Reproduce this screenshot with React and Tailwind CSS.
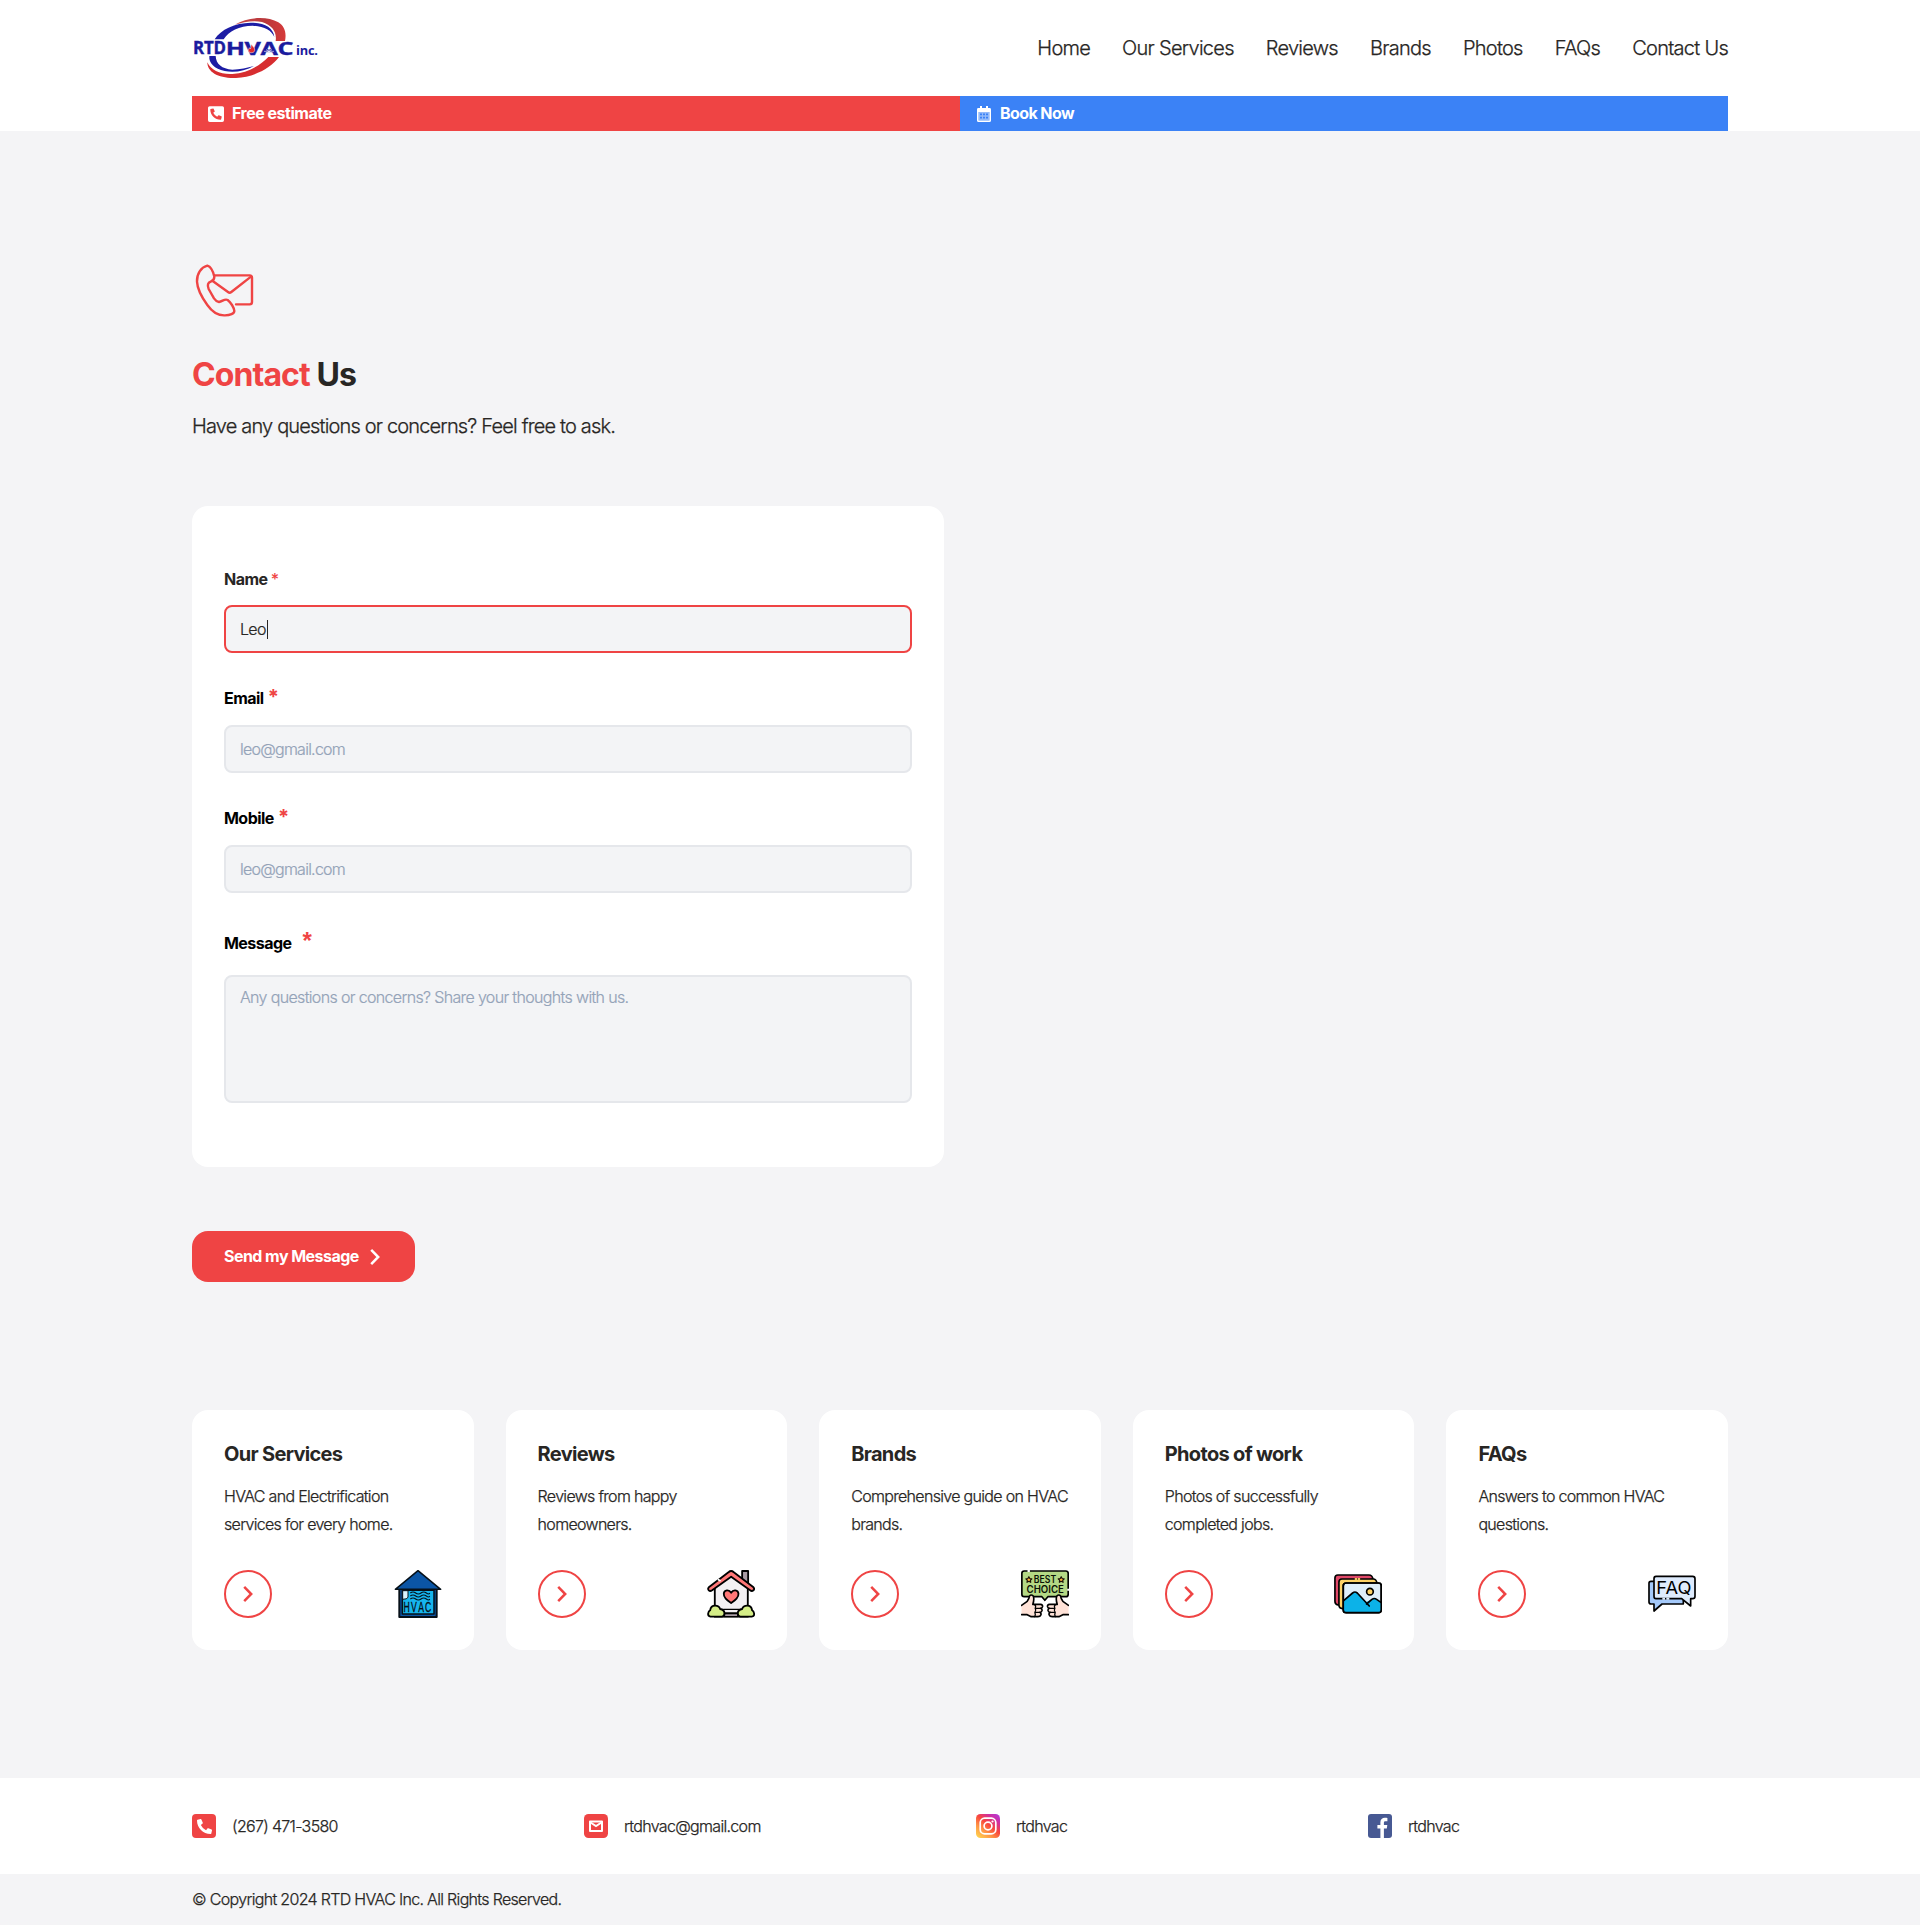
import React from "react";
import { FaPhoneAlt, FaPhoneSquareAlt } from "react-icons/fa";

function Logo() {
  return (
    <svg className="h-[72px] w-[128px]" viewBox="36 36 384 216" aria-label="RTD HVAC Inc.">
      <defs>
        <linearGradient id="arc" x1="0" x2="1">
          <stop offset="0" stopColor="#c8484a" />
          <stop offset="0.6" stopColor="#b9383b" />
          <stop offset="1" stopColor="#d63a3a" />
        </linearGradient>
      </defs>
      <path d="M164 74C205 50 262 48 295 67C314 79 320 98 315 123H287C291 96 277 76 246 66C220 60 190 66 164 74Z" fill="url(#arc)" />
      <path d="M104 118C122 88 165 69 212 68C252 68 280 82 283 111C275 91 252 79 218 77C178 77 146 93 131 118Z" fill="#1c1ca4" />
      <path d="M88 168H107C108 192 126 207 157 209C180 209 202 203 222 198C195 214 160 219 134 213C103 206 86 190 88 168Z" fill="#1c1ca4" />
      <path d="M82 187C93 211 122 224 157 222C203 219 240 197 265 171H297C272 205 222 231 168 234C116 236 82 217 82 187Z" fill="#d72d30" />
      <g fill="#1b1b9e" fontWeight="700">
        <text x="39" y="163" fontSize="52" fontFamily="'Open Sans'" textLength="98" lengthAdjust="spacingAndGlyphs" stroke="#1b1b9e" strokeWidth="1.2">RTD</text>
        <text x="137" y="165" fontSize="51" fontFamily="'Open Sans'" fontWeight="700" textLength="203" lengthAdjust="spacingAndGlyphs" stroke="#1b1b9e" strokeWidth="1">HVAC</text>
        <text x="348" y="165" fontSize="37" fontFamily="'Open Sans'" textLength="65" lengthAdjust="spacingAndGlyphs">inc.</text>
      </g>
      <path d="M214 133C218 140 226 144 224 152C222 160 207 160 205 152C204 147 207 147 208 143L211 147C214 143 212 138 214 133Z" fill="#e0282c" stroke="#fff" strokeWidth="1.5" />
      <path d="M267 144V164M258 149L276 160M276 149L258 160M252 154H282" stroke="#fff" strokeWidth="1.8" />
    </svg>
  );
}

function ContactIcon() {
  return (
    <svg className="-mt-px h-16 w-16" viewBox="36 24 192 192" fill="none" stroke="#ef4444" strokeWidth="7.2" strokeLinecap="round" strokeLinejoin="round">
      <path d="M82 47C63 52 50 71 51 95C52 118 69 147 82 165C98 188 115 197 135 196C150 196 163 191 163 183C162 172 152 157 143 150C134 145 127 155 117 156C110 155 106 151 102 145L86 117C81 105 84 98 92 95C99 92 103 87 103 80C100 67 92 50 82 47Z" />
      <path d="M104 76H209Q216 76 216 83V156Q216 163 209 163H168" />
      <path d="M97 92L144 126Q149 130 154 126L213 80" />
    </svg>
  );
}

function Calendar() {
  return (
    <svg className="h-4 w-[14px]" viewBox="0 0 14 16">
      <path fill="#fff" fillRule="evenodd" d="M3 0H5V2H9V0H11V2H12.4A1.5 1.5 0 0 1 14 3.5V14.4A1.6 1.6 0 0 1 12.4 16H1.6A1.6 1.6 0 0 1 0 14.4V3.5A1.5 1.5 0 0 1 1.6 2H3ZM1.5 6V14.4H12.5V6Z" />
      <path fill="#fff" fillOpacity=".45" d="M1.5 6H12.5V14.4H1.5Z" />
      <path fill="#3b82f6" d="M3 7.4H5V9.2H3ZM6 7.4H8V9.2H6ZM9 7.4H11V9.2H9ZM3 10.8H5V12.6H3ZM6 10.8H8V12.6H6ZM9 10.8H11V12.6H9Z" />
    </svg>
  );
}

function Chevron() {
  return (
    <svg className="h-4 w-4" viewBox="0 0 16 16" fill="none" stroke="currentColor" strokeWidth="2.5" strokeLinejoin="miter">
      <path d="M4.2 .9L11.2 8L4.2 15.1" />
    </svg>
  );
}

function HvacIcon() {
  return (
    <svg className="h-12 w-12" viewBox="41 60 144 144" strokeLinejoin="round">
      <path d="M57 112H169V201H57Z" fill="#0b55a5" stroke="#061018" strokeWidth="6" />
      <path d="M113 62L181 118H45Z" fill="#0b55a5" stroke="#061018" strokeWidth="4.5" />
      <path d="M66 121H161V192H66Z" fill="#16b5ee" stroke="#061018" strokeWidth="4.5" />
      <path d="M67 122H83V142Q80 148 67 148Z" fill="#d9f3ff" stroke="#061018" strokeWidth="3" />
      <path d="M90 129Q98 123 106 129T122 129T138 129T148 129M90 138Q98 132 106 138T122 138T138 138T148 138M90 147Q98 141 106 147T122 147T138 147T148 147" fill="none" stroke="#061018" strokeWidth="3.6" />
      <text transform="translate(0 187) scale(.62 1)" x="112 149 183 216" fontSize="42" fontFamily="'Liberation Sans'" fill="#061018" stroke="#061018" strokeWidth="1">HVAC</text>
    </svg>
  );
}

function HomeHeartIcon() {
  return (
    <svg className="h-12 w-12" viewBox="51.6 60 144 144" stroke="#000" strokeWidth="5.5" strokeLinejoin="round" strokeLinecap="round">
      <path d="M157 63H175V104L157 90Z" fill="#a89ba3" />
      <path d="M75 110L124 72L174 110V200H75Z" fill="#f3f0f3" />
      <path d="M124 63Q128 63 131 66L191 112Q195 117 191 121Q186 125 181 121L124 80L67 121Q61 125 57 121Q53 116 57 112L117 66Q120 63 124 63Z" fill="#ff7777" />
      <path d="M124 159C111 150 101 143 102 131C103 119 118 118 124 128C130 118 145 119 146 131C147 143 137 150 124 159Z" fill="#ff7777" />
      <path d="M101 178H147M101 189H147" strokeWidth="4" />
      <path d="M104 191H144V200H104Z" fill="#a89ba3" strokeWidth="4" />
      <path d="M62 200Q54 199 55 191Q56 184 61 181Q63 167 76 167Q88 167 91 177Q104 179 104 190Q104 200 96 200Z" fill="#d5ee87" />
      <path d="M186 200Q194 199 193 191Q192 184 187 181Q185 167 172 167Q160 167 157 177Q144 179 144 190Q144 200 152 200Z" fill="#d5ee87" />
      <path d="M86 89L91 92" stroke="#fff" strokeWidth="5" />
    </svg>
  );
}

function Thumb() {
  return (
    <g stroke="#000" strokeWidth="5" strokeLinejoin="round" strokeLinecap="round">
      <path d="M49 151L66 139Q72 131 73 123Q78 117 84 123Q88 131 83 148H106Q113 149 112 155Q111 160 106 160Q112 162 110 168Q108 172 104 172Q109 175 107 180Q105 185 98 185H78L66 179H49" fill="#ffe2d7" />
      <path d="M106 160H91M104 172H91M86 148Q94 151 90 160Q94 166 89 172Q92 180 88 185" fill="none" strokeWidth="4" />
    </g>
  );
}

function BestChoiceIcon() {
  const star = "M0-9L2.8-3.5L9-2.6L4.6 1.8L5.6 8L0 5L-5.6 8L-4.6 1.8L-9-2.6L-2.8-3.5Z";
  return (
    <svg className="h-12 w-12" viewBox="47.4 45 144 144">
      <path d="M57 48H182Q189 48 189 55V118Q189 125 182 125H128L119 136L110 125H57Q50 125 50 118V55Q50 48 57 48Z" fill="#b4d985" stroke="#000" strokeWidth="5" strokeLinejoin="round" />
      <path d="M67 48H74M189 101V107" stroke="#fff" strokeWidth="6" />
      <g fill="#ffb03a" stroke="#1b1309" strokeWidth="3.5" strokeLinejoin="round">
        <path d={star} transform="translate(71 74)" />
        <path d={star} transform="translate(168 74)" />
      </g>
      <g fontFamily="Inter" fontWeight="600" fontSize="30" fill="#0c1206" letterSpacing="0">
        <text x="86" y="85" textLength="67" lengthAdjust="spacingAndGlyphs">BEST</text>
        <text x="64" y="113" textLength="112" lengthAdjust="spacingAndGlyphs">CHOICE</text>
      </g>
      <Thumb />
      <g transform="translate(239 0) scale(-1 1)"><Thumb /></g>
    </svg>
  );
}

function PhotosIcon() {
  return (
    <svg className="h-12 w-12" viewBox="43.2 45 144 144" stroke="#000" strokeWidth="5" strokeLinejoin="round" strokeLinecap="round">
      <path d="M55 150Q46 148 46 139V69Q46 60 55 60H148Q158 60 160 72L70 90V150Z" fill="#e04868" />
      <path d="M69 161Q58 160 58 150V81Q58 72 67 72H161Q170 72 172 84L80 100V161Z" fill="#fdd267" />
      <path d="M80 84H177Q185 84 185 92V164Q185 173 177 173H80Q71 173 71 164V92Q71 84 80 84Z" fill="#e0effb" />
      <path d="M73 136L99 114Q106 108 113 114L140 141L157 133Q164 128 171 133L184 142V164Q184 172 177 172H80Q72 172 72 164Z" fill="#0cb2e8" stroke="none" />
      <path d="M73 136L99 114Q106 108 113 114L149 153M141 147L157 133Q164 128 171 133L184 142" fill="none" />
      <circle cx="151" cy="110" r="10" fill="#fdd267" />
      <path d="M80 84H177Q185 84 185 92V164Q185 173 177 173H80Q71 173 71 164V92Q71 84 80 84Z" fill="none" />
      <path d="M108 72H110M117 72H119" stroke="#fdd267" strokeWidth="6" />
    </svg>
  );
}

function FaqIcon() {
  return (
    <svg className="h-12 w-12" viewBox="54 45 144 144" strokeLinejoin="round">
      <path d="M63 79H160V147H96L72 168V147H63Q57 147 57 141V85Q57 79 63 79Z" fill="#a4c9fa" stroke="#000" strokeWidth="5" />
      <path d="M78 64H188Q195 64 195 71V124Q195 131 188 131H182V153L155 131H78Q72 131 72 124V71Q72 64 78 64Z" fill="#deebfd" stroke="#000" strokeWidth="5" />
      <path d="M97 131H105M109 131H118" stroke="#deebfd" strokeWidth="6" />
      <text x="79" y="116" fontSize="52" fontFamily="Inter" fontWeight="400" letterSpacing="0" textLength="105" lengthAdjust="spacingAndGlyphs" fill="#000">FAQ</text>
    </svg>
  );
}

function MailTile() {
  return (
    <svg className="h-6 w-6" viewBox="0 0 24 24">
      <rect width="24" height="24" rx="4.5" fill="#ef4444" />
      <path d="M6 7.5H18V17H6Z" fill="none" stroke="#fff" strokeWidth="2" strokeLinejoin="round" />
      <path d="M6.5 8.5L12 12L17.5 8.5" fill="none" stroke="#fff" strokeWidth="2" />
    </svg>
  );
}

function InstagramTile() {
  return (
    <svg className="h-6 w-6" viewBox="0 0 24 24">
      <defs>
        <linearGradient id="ig" x1="0.1" y1="1" x2="0.9" y2="0">
          <stop offset="0" stopColor="#ffd34f" />
          <stop offset="0.3" stopColor="#ff9445" />
          <stop offset="0.55" stopColor="#f8463c" />
          <stop offset="0.8" stopColor="#d02fa0" />
          <stop offset="1" stopColor="#b43ad6" />
        </linearGradient>
      </defs>
      <rect width="24" height="24" rx="4.5" fill="url(#ig)" />
      <rect x="4.2" y="4.2" width="15.6" height="15.6" rx="4.4" fill="none" stroke="#fff" strokeWidth="1.7" />
      <circle cx="12" cy="12" r="3.9" fill="none" stroke="#fff" strokeWidth="1.7" />
      <circle cx="16.5" cy="7.5" r="1.1" fill="#fff" />
    </svg>
  );
}

function FacebookTile() {
  return (
    <svg className="h-6 w-6" viewBox="0 0 24 24">
      <rect width="24" height="24" rx="3" fill="#475993" />
      <path d="M12.4 24V14.6H9.4V11H12.4V8.3C12.4 5.4 14.2 3.8 16.9 3.8C18.1 3.8 19.1 3.9 19.4 4V7.2H17.6C16.1 7.2 15.9 7.9 15.9 8.9V11H19.3L18.8 14.6H15.9V24Z" fill="#fff" />
    </svg>
  );
}

const nav = ["Home", "Our Services", "Reviews", "Brands", "Photos", "FAQs", "Contact Us"];

const cards = [
  ["Our Services", "HVAC and Electrification services for every home.", HvacIcon],
  ["Reviews", "Reviews from happy homeowners.", HomeHeartIcon],
  ["Brands", "Comprehensive guide on HVAC brands.", BestChoiceIcon],
  ["Photos of work", "Photos of successfully completed jobs.", PhotosIcon],
  ["FAQs", "Answers to common HVAC questions.", FaqIcon],
];

const body = "[-webkit-text-stroke:0.25px]";
const field = "flex h-12 items-center rounded-lg border-2 bg-[#f3f4f6] px-3.5 [-webkit-text-stroke:0.2px]";
const star = "ml-px text-xl leading-6 font-bold text-[#ef4444]";

export default function App() {
  return (
    <div className="min-h-[1925px] bg-[#f4f4f6] font-['Inter',sans-serif] text-base leading-[19px] font-light tracking-[-0.0425em] text-[#282624]">
      <header className="bg-white">
        <div className="mx-auto w-[1536px]">
          <div className="flex h-24 items-center justify-between">
            <Logo />
            <nav className={body + " flex gap-8 text-xl tracking-[-0.0363em]"}>
              {nav.map((n) => <a key={n}>{n}</a>)}
            </nav>
          </div>
          <div className="grid h-[35px] grid-cols-2 font-bold tracking-[-0.031em] text-white">
            <div className="flex items-center gap-2 bg-[#ef4444] px-4">
              <FaPhoneSquareAlt className="h-[18px] w-4" preserveAspectRatio="none" />
              Free estimate
            </div>
            <div className="flex items-center gap-2 bg-[#3b82f6] px-4 tracking-[-0.037em]">
              <span className="flex w-4 justify-center"><Calendar /></span>
              Book Now
            </div>
          </div>
        </div>
      </header>

      <main className="mx-auto w-[1536px] py-32">
        <ContactIcon />
        <h1 className="mt-[33px] text-[32px] leading-[39px] font-bold tracking-[-0.029em]"><span className="text-[#ef4444]">Contact</span> Us</h1>
        <p className={body + " mt-4 text-xl leading-8 tracking-[-0.0415em]"}>Have any questions or concerns? Feel free to ask.</p>

        <form className="mt-16 w-[752px] rounded-2xl bg-white px-8 py-16">
          <div className="font-bold tracking-[-0.034em]">Name <span className="font-medium text-[#ef4444]">*</span></div>
          <div className={field + " mt-4 border-[#ef4444]"}>
            Leo<span className="ml-px h-[19px] w-px bg-[#282624]" />
          </div>
          <div className="mt-8 h-6 font-bold tracking-[-0.034em] text-black">Email <span className={star}>*</span></div>
          <div className={field + " mt-4 border-[#e5e7eb] tracking-[-0.047em] text-[#94a3b8]"}>leo@gmail.com</div>
          <div className="mt-8 h-6 font-bold tracking-[-0.034em] text-black">Mobile <span className={star}>*</span></div>
          <div className={field + " mt-4 border-[#e5e7eb] tracking-[-0.047em] text-[#94a3b8]"}>leo@gmail.com</div>
          <div className="mt-8 flex h-[34px] items-start font-bold tracking-[-0.034em] text-black">
            <span className="pt-[9px]">Message</span>
            <span className="ml-[11px] pt-0.5 font-['Liberation_Sans'] text-2xl leading-7 tracking-normal text-[#ef4444]">*</span>
          </div>
          <div className="mt-4 h-32 rounded-lg border-2 border-[#e5e7eb] bg-[#f3f4f6] px-3.5 pt-[11px] tracking-[-0.041em] text-[#94a3b8] [-webkit-text-stroke:0.2px]">
            Any questions or concerns? Share your thoughts with us.
          </div>
        </form>

        <button className="mt-16 flex items-center gap-2 rounded-2xl bg-[#ef4444] px-8 py-4 font-bold tracking-[-0.034em] text-white">
          Send my Message <Chevron />
        </button>

        <section className="mt-32 grid grid-cols-5 gap-8">
          {cards.map(([title, text, Icon]) => (
            <article key={title} className="rounded-2xl bg-white p-8">
              <h2 className="text-xl leading-6 font-bold tracking-[-0.034em]">{title}</h2>
              <p className={body + " mt-4 h-14 leading-7"}>{text}</p>
              <div className="mt-8 flex items-center justify-between">
                <span className="flex h-12 w-12 items-center justify-center rounded-full border-2 border-[#ef4444] text-[#ef4444]">
                  <Chevron />
                </span>
                <Icon />
              </div>
            </article>
          ))}
        </section>
      </main>

      <footer className={body}>
        <div className="bg-white">
          <div className="mx-auto grid h-24 w-[1536px] grid-cols-4 items-center gap-8">
            <div className="flex items-center gap-4">
              <span className="flex h-6 w-6 items-center justify-center rounded bg-[#ef4444] text-white"><FaPhoneAlt size={15} /></span>
              (267) 471-3580
            </div>
            <div className="flex items-center gap-4"><MailTile />rtdhvac@gmail.com</div>
            <div className="flex items-center gap-4"><InstagramTile />rtdhvac</div>
            <div className="flex items-center gap-4"><FacebookTile />rtdhvac</div>
          </div>
        </div>
        <p className="mx-auto w-[1536px] py-4">© Copyright 2024 RTD HVAC Inc. All Rights Reserved.</p>
      </footer>
    </div>
  );
}
